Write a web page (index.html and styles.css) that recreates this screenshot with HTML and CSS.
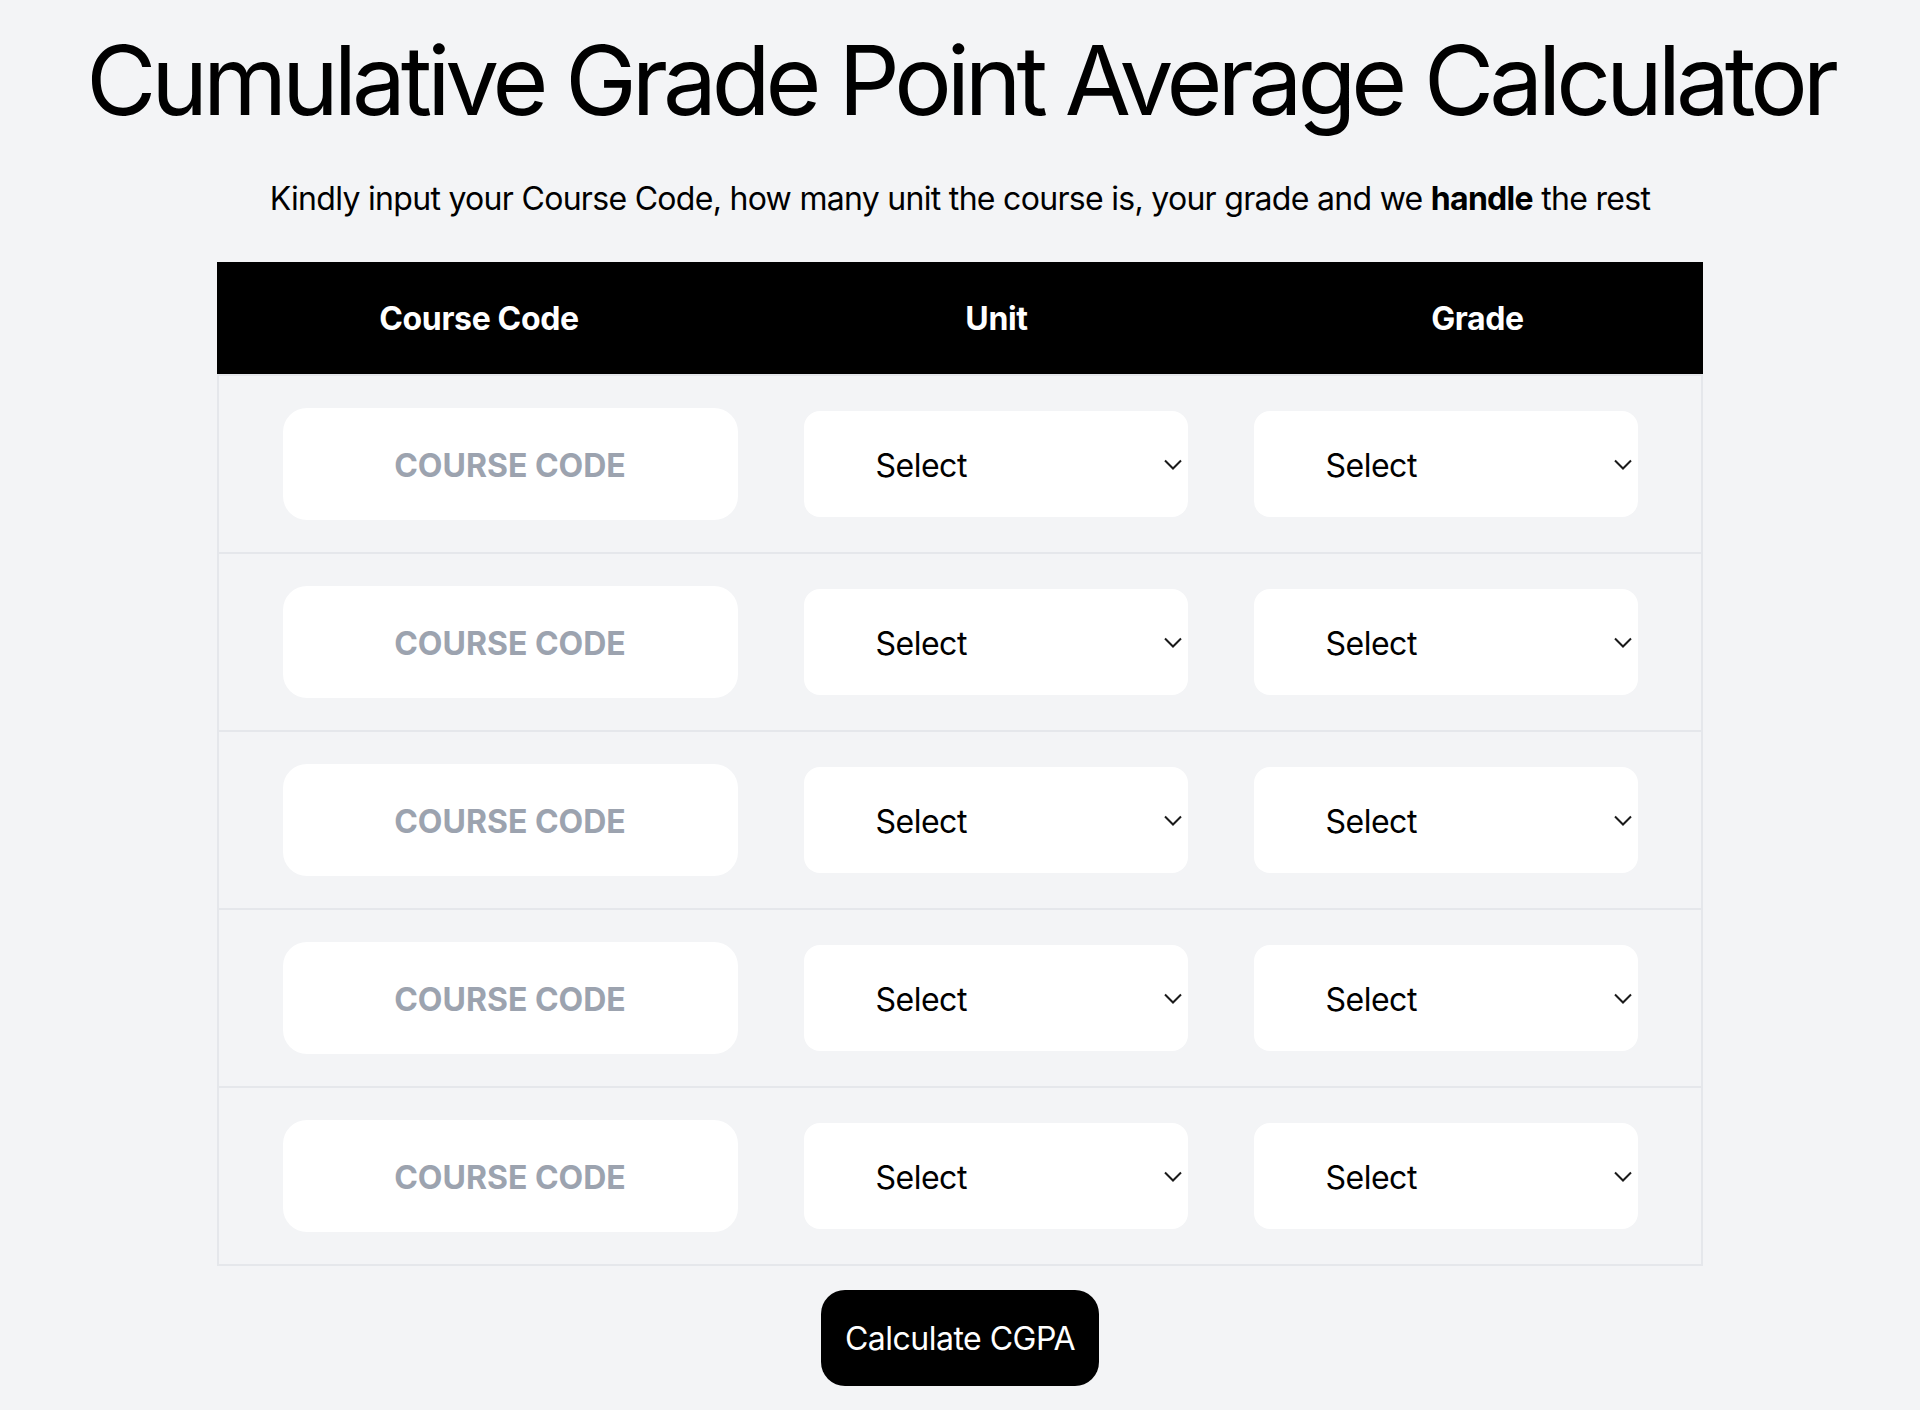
FILE: index.html
```html
<!DOCTYPE html>
<html lang="en">
<head>
<meta charset="utf-8">
<title>CGPA Calculator</title>
<link rel="stylesheet" href="styles.css">
</head>
<body>
<main class="page">
  <h1 class="title">Cumulative Grade Point Average Calculator</h1>
  <p class="lead">Kindly input your Course Code, how many unit the course is, your grade and we <strong>handle</strong> the rest</p>

  <section class="grid-table">
    <div class="grid-head">
      <div class="head-cell">Course Code</div>
      <div class="head-cell">Unit</div>
      <div class="head-cell">Grade</div>
    </div>

    <div class="grid-row">
      <input class="code-input" type="text" placeholder="COURSE CODE">
      <div class="select-wrap">
        <select class="select"><option>Select</option><option>1</option><option>2</option><option>3</option><option>4</option><option>5</option><option>6</option></select>
        <svg class="chev" viewBox="0 0 18 11" aria-hidden="true"><path d="M1 1.5 L9 9.5 L17 1.5"/></svg>
      </div>
      <div class="select-wrap">
        <select class="select"><option>Select</option><option>A</option><option>B</option><option>C</option><option>D</option><option>E</option><option>F</option></select>
        <svg class="chev" viewBox="0 0 18 11" aria-hidden="true"><path d="M1 1.5 L9 9.5 L17 1.5"/></svg>
      </div>
    </div>

    <div class="grid-row">
      <input class="code-input" type="text" placeholder="COURSE CODE">
      <div class="select-wrap">
        <select class="select"><option>Select</option><option>1</option><option>2</option><option>3</option><option>4</option><option>5</option><option>6</option></select>
        <svg class="chev" viewBox="0 0 18 11" aria-hidden="true"><path d="M1 1.5 L9 9.5 L17 1.5"/></svg>
      </div>
      <div class="select-wrap">
        <select class="select"><option>Select</option><option>A</option><option>B</option><option>C</option><option>D</option><option>E</option><option>F</option></select>
        <svg class="chev" viewBox="0 0 18 11" aria-hidden="true"><path d="M1 1.5 L9 9.5 L17 1.5"/></svg>
      </div>
    </div>

    <div class="grid-row">
      <input class="code-input" type="text" placeholder="COURSE CODE">
      <div class="select-wrap">
        <select class="select"><option>Select</option><option>1</option><option>2</option><option>3</option><option>4</option><option>5</option><option>6</option></select>
        <svg class="chev" viewBox="0 0 18 11" aria-hidden="true"><path d="M1 1.5 L9 9.5 L17 1.5"/></svg>
      </div>
      <div class="select-wrap">
        <select class="select"><option>Select</option><option>A</option><option>B</option><option>C</option><option>D</option><option>E</option><option>F</option></select>
        <svg class="chev" viewBox="0 0 18 11" aria-hidden="true"><path d="M1 1.5 L9 9.5 L17 1.5"/></svg>
      </div>
    </div>

    <div class="grid-row">
      <input class="code-input" type="text" placeholder="COURSE CODE">
      <div class="select-wrap">
        <select class="select"><option>Select</option><option>1</option><option>2</option><option>3</option><option>4</option><option>5</option><option>6</option></select>
        <svg class="chev" viewBox="0 0 18 11" aria-hidden="true"><path d="M1 1.5 L9 9.5 L17 1.5"/></svg>
      </div>
      <div class="select-wrap">
        <select class="select"><option>Select</option><option>A</option><option>B</option><option>C</option><option>D</option><option>E</option><option>F</option></select>
        <svg class="chev" viewBox="0 0 18 11" aria-hidden="true"><path d="M1 1.5 L9 9.5 L17 1.5"/></svg>
      </div>
    </div>

    <div class="grid-row">
      <input class="code-input" type="text" placeholder="COURSE CODE">
      <div class="select-wrap">
        <select class="select"><option>Select</option><option>1</option><option>2</option><option>3</option><option>4</option><option>5</option><option>6</option></select>
        <svg class="chev" viewBox="0 0 18 11" aria-hidden="true"><path d="M1 1.5 L9 9.5 L17 1.5"/></svg>
      </div>
      <div class="select-wrap">
        <select class="select"><option>Select</option><option>A</option><option>B</option><option>C</option><option>D</option><option>E</option><option>F</option></select>
        <svg class="chev" viewBox="0 0 18 11" aria-hidden="true"><path d="M1 1.5 L9 9.5 L17 1.5"/></svg>
      </div>
    </div>
  </section>

  <div class="actions">
    <button class="btn" type="button">Calculate CGPA</button>
  </div>
</main>
</body>
</html>
```

FILE: styles.css
```css
html {
  background: #ffffff;
}

body {
  margin: 0;
  font-family: "Inter", "Liberation Sans", sans-serif;
  color: #000000;
}

.page {
  background: #f3f4f6;
  padding: 32px 0 24px;
}

.title {
  margin: 0;
  font-size: 96px;
  line-height: 96px;
  font-weight: 400;
  text-align: center;
  letter-spacing: -5.05px;
  white-space: nowrap;
}

.lead {
  margin: 47px 0 0;
  font-size: 32px;
  line-height: 48px;
  text-align: center;
  letter-spacing: -0.7px;
}

.lead strong {
  font-weight: 700;
}

.grid-table {
  width: 1486px;
  margin: 39px auto 0;
  border-bottom: 2px solid #e5e7eb;
}

.grid-head {
  display: grid;
  grid-template-columns: 524px 511px 1fr;
  background: #000000;
  color: #ffffff;
  padding: 33px 0 31px;
}

.head-cell {
  font-size: 32px;
  line-height: 48px;
  font-weight: 700;
  text-align: center;
  letter-spacing: -0.35px;
}

.grid-row {
  display: grid;
  grid-template-columns: 455px 384px 384px;
  column-gap: 66px;
  justify-content: center;
  align-items: center;
  padding: 32px 0;
  border-top: 2px solid #e5e7eb;
  border-left: 2px solid #e5e7eb;
  border-right: 2px solid #e5e7eb;
}

.code-input {
  box-sizing: border-box;
  width: 455px;
  height: 112px;
  border: none;
  border-radius: 24px;
  background: #ffffff;
  font-family: inherit;
  font-size: 32px;
  font-weight: 700;
  text-align: center;
  color: #111827;
  outline: none;
  padding: 2px 16px 0;
}

.code-input::placeholder {
  color: #9ca3af;
  opacity: 1;
}

.select-wrap {
  position: relative;
  width: 384px;
  height: 106px;
}

.select {
  box-sizing: border-box;
  appearance: none;
  -webkit-appearance: none;
  width: 100%;
  height: 100%;
  border: none;
  border-radius: 16px;
  background: #ffffff;
  font-family: inherit;
  font-size: 32px;
  letter-spacing: -0.5px;
  color: #000000;
  padding: 2px 40px 0 72px;
  outline: none;
}

.chev {
  position: absolute;
  right: 6px;
  top: 48px;
  width: 18px;
  height: 11px;
  pointer-events: none;
}

.chev path {
  fill: none;
  stroke: #1a1a1a;
  stroke-width: 2;
}

.actions {
  display: flex;
  justify-content: center;
  margin-top: 24px;
}

.btn {
  background: #000000;
  color: #ffffff;
  border: none;
  border-radius: 24px;
  font-family: inherit;
  font-size: 32px;
  line-height: 48px;
  font-weight: 400;
  letter-spacing: -0.5px;
  padding: 25px 24px 23px;
  cursor: pointer;
}
```
